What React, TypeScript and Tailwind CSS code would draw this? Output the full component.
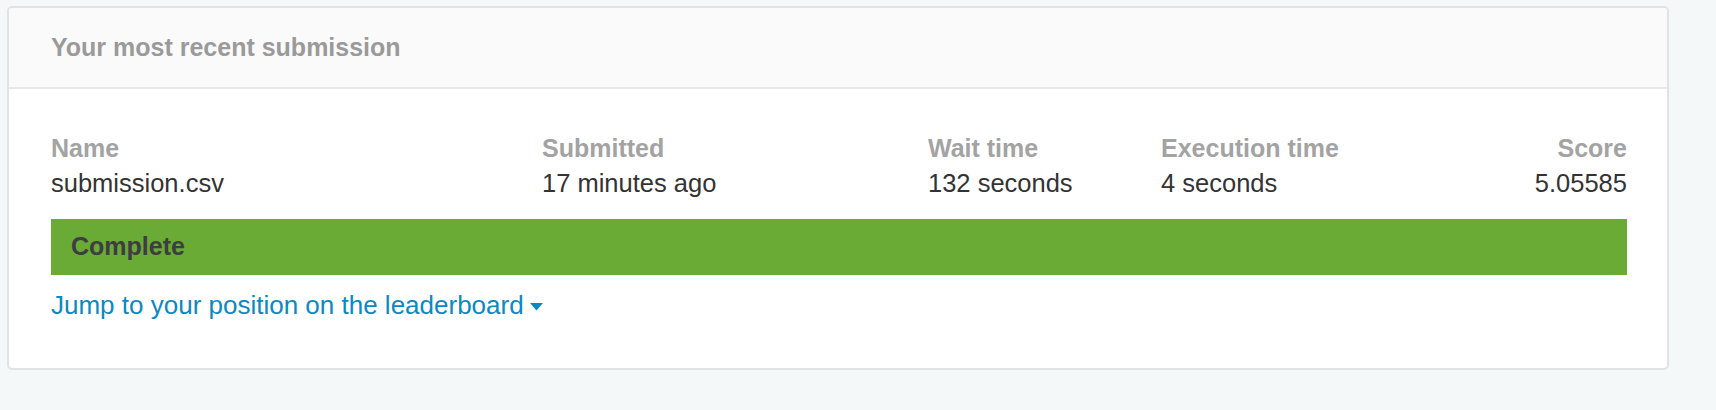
function Column({ label, value, className }: { label: string; value: string; className?: string }) {
  return (
    <div className={className}>
      <div className="font-bold text-[#a3a3a3] leading-[35px]">{label}</div>
      <div className="text-[#333333] text-[25.5px] leading-[35px]">{value}</div>
    </div>
  );
}

export default function App() {
  return (
    <div className="min-h-[410px] bg-[#f5f8f9] pt-[6px] pl-[7px] pr-[47px] pb-[40px] font-['Liberation_Sans',Arial,sans-serif] text-[25px]">
      <div className="rounded-[5px] border-2 border-[#e0e2e3] bg-white overflow-hidden">
        <div className="h-[81px] bg-[#fafafa] border-b-2 border-[#e8e8e8] flex items-center pl-[42px]">
          <h2 className="font-bold text-[#9a9a9a] text-[25px]">Your most recent submission</h2>
        </div>
        <div className="pl-[42px] pr-[40px] pt-[42px] pb-[45px]">
          <div className="flex">
            <Column label="Name" value="submission.csv" className="w-[491px]" />
            <Column label="Submitted" value="17 minutes ago" className="w-[386px]" />
            <Column label="Wait time" value="132 seconds" className="w-[233px]" />
            <Column label="Execution time" value="4 seconds" className="flex-1" />
            <Column label="Score" value="5.05585" className="text-right" />
          </div>
          <div className="mt-[18px] h-[56px] bg-[#69ab35] flex items-center pl-[20px]">
            <span className="font-bold text-[#3d3d42]">Complete</span>
          </div>
          <div className="mt-[13px] leading-[35px]">
            <a href="#" className="inline-flex items-center gap-[6px] text-[26px] text-[#0a89c3]">
              Jump to your position on the leaderboard
              <svg width="13" height="8" viewBox="0 0 13 8" className="mt-[2px]">
                <path d="M0 0 L13 0 L6.5 7.5 Z" fill="#0a89c3" />
              </svg>
            </a>
          </div>
        </div>
      </div>
    </div>
  );
}
